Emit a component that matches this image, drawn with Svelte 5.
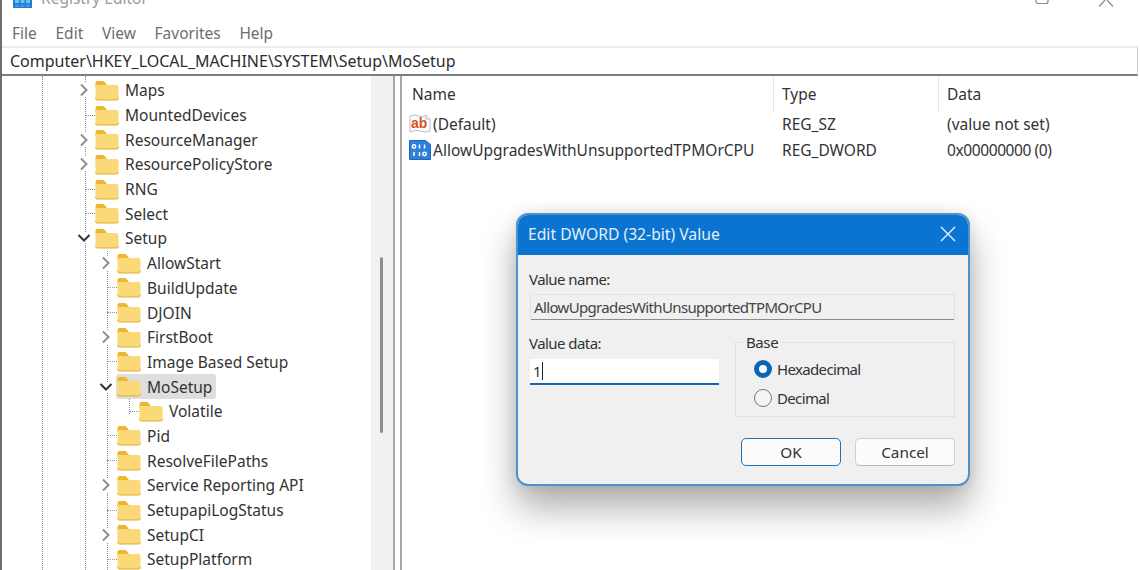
<script>
  const rows = [
    { name: 'Maps', depth: 0, arrow: 'closed' },
    { name: 'MountedDevices', depth: 0 },
    { name: 'ResourceManager', depth: 0, arrow: 'closed' },
    { name: 'ResourcePolicyStore', depth: 0, arrow: 'closed' },
    { name: 'RNG', depth: 0 },
    { name: 'Select', depth: 0 },
    { name: 'Setup', depth: 0, arrow: 'open' },
    { name: 'AllowStart', depth: 1, arrow: 'closed' },
    { name: 'BuildUpdate', depth: 1 },
    { name: 'DJOIN', depth: 1 },
    { name: 'FirstBoot', depth: 1, arrow: 'closed' },
    { name: 'Image Based Setup', depth: 1 },
    { name: 'MoSetup', depth: 1, arrow: 'open', selected: true },
    { name: 'Volatile', depth: 2 },
    { name: 'Pid', depth: 1 },
    { name: 'ResolveFilePaths', depth: 1 },
    { name: 'Service Reporting API', depth: 1, arrow: 'closed' },
    { name: 'SetupapiLogStatus', depth: 1 },
    { name: 'SetupCI', depth: 1, arrow: 'closed' },
    { name: 'SetupPlatform', depth: 1 }
  ];
</script>

<div class="window">
  <div class="titlebar">
    <svg class="app-icon" width="19" height="8" viewBox="0 0 19 8">
      <rect x="0" y="0" width="19" height="8" fill="#1f7fd1" />
      <path d="M2 0h4v3H2zM7.500 0h4v3h-4zM13 0h4v3h-4z" fill="#6fbdf2" />
      <path d="M2 4.500h4V7H2zM7.500 4.500h4V7h-4zM13 4.500h4V7h-4z" fill="#3f9ce4" />
    </svg>
    <span class="title">Registry Editor</span>
    <svg class="win-btn max" width="14" height="5" viewBox="0 0 14 5">
      <path d="M1 0v1.500a2 2 0 0 0 2 2h8a2 2 0 0 0 2-2V0" fill="none" stroke="#8a8a8a" stroke-width="1.2" />
    </svg>
    <svg class="win-btn close" width="16" height="7" viewBox="0 0 16 7">
      <path d="M7 0L1 6.500M9 0l6 6.500" fill="none" stroke="#8a8a8a" stroke-width="1.2" />
    </svg>
  </div>

  <nav class="menu">
    <span>File</span><span>Edit</span><span>View</span><span>Favorites</span><span>Help</span>
  </nav>

  <div class="address">Computer\HKEY_LOCAL_MACHINE\SYSTEM\Setup\MoSetup</div>

  <div class="panes">
    <div class="tree">
      <div class="tree-list">
        <i class="guide g0"></i>
        <i class="guide g1"></i>
        <i class="guide g2"></i>
        <i class="guide g3"></i>
        {#each rows as row}
          <div class="row d{row.depth}">
            <span class="arrow">
              {#if row.arrow === 'closed'}
                <svg width="10" height="14" viewBox="0 0 10 14"><path d="M2 1.500l5.500 5.500L2 12.500" fill="none" stroke="#8c8c8c" stroke-width="1.9" /></svg>
              {:else if row.arrow === 'open'}
                <svg width="14" height="10" viewBox="0 0 14 10"><path d="M1.500 2l5.500 5.500L12.500 2" fill="none" stroke="#333" stroke-width="2" /></svg>
              {:else}
                <i class="stub"></i>
              {/if}
            </span>
            <span class="item" class:selected={row.selected}>
              <svg class="folder" width="24" height="21" viewBox="0 0 24 21">
                <path d="M0.500 3a2 2 0 0 1 2-2h6l3 3v3h-11z" fill="#eeb530" />
                <path d="M0.500 5h21a2 2 0 0 1 2 2v11a2 2 0 0 1-2 2h-19a2 2 0 0 1-2-2z" fill="#fbd978" />
                <path d="M0.500 18a2 2 0 0 0 2 2h19a2 2 0 0 0 2-2" fill="none" stroke="#e2ab35" stroke-width="1" />
              </svg>
              <span class="label">{row.name}</span>
            </span>
          </div>
        {/each}
      </div>
      <div class="scrollbar"><i class="thumb"></i></div>
    </div>

    <div class="values">
      <div class="thead">
        <span class="c-name">Name</span>
        <span class="c-type">Type</span>
        <span class="c-data">Data</span>
      </div>
      <div class="vrow">
        <span class="c-name">
          <svg class="vicon" width="22" height="22" viewBox="0 0 22 22">
            <path d="M1 3q5-2 9 0t7-1l4 4v12q-5 2-10 0t-10 1z" fill="#fff" stroke="#bdbdbd" />
            <path d="M17 2v4h4" fill="#f2f2f2" stroke="#bdbdbd" />
            <text class="ab" x="2" y="14.500">ab</text>
          </svg>
          (Default)
        </span>
        <span class="c-type">REG_SZ</span>
        <span class="c-data">(value not set)</span>
      </div>
      <div class="vrow">
        <span class="c-name">
          <svg class="vicon" width="22" height="22" viewBox="0 0 22 22">
            <path d="M0.500 1.500h16l5 4v15h-21z" fill="#2f7fdc" stroke="#2067b8" />
            <g fill="none" stroke="#fff" stroke-width="1.500">
              <circle cx="5" cy="7.500" r="1.700" />
              <path d="M10.500 5.500v4M15.500 5.500v4M5 13v4M10.500 13v4" />
              <circle cx="15.500" cy="15" r="1.700" />
            </g>
          </svg>
          AllowUpgradesWithUnsupportedTPMOrCPU
        </span>
        <span class="c-type">REG_DWORD</span>
        <span class="c-data data-value">0x00000000 (0)</span>
      </div>
    </div>
  </div>

  <div class="dialog">
    <div class="dlg-title">
      <span>Edit DWORD (32-bit) Value</span>
      <svg width="16" height="16" viewBox="0 0 16 16"><path d="M1 1l14 14M15 1L1 15" stroke="#e8f2fb" stroke-width="1.400" fill="none" /></svg>
    </div>
    <div class="dlg-body">
      <div class="lbl">Value name:</div>
      <div class="name-field">AllowUpgradesWithUnsupportedTPMOrCPU</div>
      <div class="dlg-cols">
        <div class="data-col">
          <div class="lbl">Value data:</div>
          <div class="data-field">1<i class="caret"></i></div>
        </div>
        <fieldset class="base">
          <legend>Base</legend>
          <div class="radio"><i class="dot on"></i>Hexadecimal</div>
          <div class="radio"><i class="dot"></i>Decimal</div>
        </fieldset>
      </div>
      <div class="btns">
        <button class="ok">OK</button>
        <button>Cancel</button>
      </div>
    </div>
  </div>
</div>

<style>
  :global(body) {
    margin: 0;
    background: #fff;
  }

  .window {
    position: relative;
    width: 1140px;
    height: 570px;
    overflow: hidden;
    box-sizing: border-box;
    border-left: 2px solid #6f6f6f;
    padding-right: 2px;
    background: #fff;
    font-family: "Noto Sans", "Open Sans", sans-serif;
    font-size: 16px;
    color: #333;
  }

  .titlebar {
    height: 12px;
    display: flex;
    align-items: flex-start;
    overflow: hidden;
    padding-left: 11px;
    color: #9a9a9a;
  }
  .app-icon { margin-right: 9px; flex: none; }
  .title { margin-top: -12px; font-size: 15.500px; line-height: 20px; flex: 1; }
  .win-btn { flex: none; }
  .win-btn.max { margin-right: 49px; }
  .win-btn.close { margin-right: 24px; }

  .menu {
    height: 34px;
    box-sizing: border-box;
    padding: 8px 0 0 10px;
    display: flex;
    align-items: center;
    gap: 18.700px;
    color: #6e6e6e;
    font-size: 15.500px;
  }

  .address {
    height: 30px;
    box-sizing: border-box;
    border-top: 2px solid #ececec;
    border-bottom: 2px solid #7e7e7e;
    border-right: 1px solid #d0d0d0;
    line-height: 26px;
    padding-left: 8px;
    font-size: 16px;
    color: #2c2c2c;
  }

  .panes {
    display: flex;
    height: 494px;
  }

  .tree {
    width: 393px;
    flex: none;
    display: flex;
    border-right: 2px solid #a8a8a8;
    box-sizing: border-box;
  }
  .tree-list {
    position: relative;
    flex: 1;
    overflow: hidden;
    padding-top: 2px;
  }
  .guide {
    position: absolute;
    border-left: 1px dotted #8f8f8f;
    width: 0;
  }
  .g0 { left: 40px; top: 0; bottom: 0; }
  .g1 { left: 83px; top: 0; bottom: 0; }
  .g2 { left: 105px; top: 175px; bottom: 0; }
  .g3 { left: 127px; top: 322px; height: 16px; }

  .row {
    height: 24.700px;
    display: flex;
    align-items: center;
    position: relative;
    white-space: nowrap;
  }
  .arrow {
    width: 22px;
    height: 100%;
    flex: none;
    display: flex;
    align-items: center;
    justify-content: center;
    position: relative;
  }
  .arrow svg { background: #fff; }
  .d0 { padding-left: 71px; }
  .d1 { padding-left: 93px; }
  .d2 { padding-left: 115px; }
  .stub {
    display: block;
    width: 10px;
    margin-left: 12px;
    border-top: 1px dotted #8f8f8f;
  }
  .item {
    display: flex;
    align-items: center;
    height: 100%;
    position: relative;
  }
  .item.selected {
    background: #dedede;
    padding: 0 4px 0 1px;
    margin-left: -1px;
    border-radius: 3px;
  }
  .folder { flex: none; margin-right: 6px; }
  .label { font-size: 15.500px; color: #333; }

  .scrollbar {
    width: 22px;
    flex: none;
    background: #f1f1f1;
    position: relative;
  }
  .thumb {
    position: absolute;
    left: 9px;
    top: 181px;
    width: 3px;
    height: 176px;
    background: #8d8d8d;
    border-radius: 2px;
  }

  .values {
    flex: 1;
    margin-left: 5px;
    border-left: 2px solid #a8a8a8;
    padding-top: 1px;
    font-size: 15.500px;
  }
  .thead, .vrow {
    display: flex;
    align-items: center;
    white-space: nowrap;
  }
  .thead { height: 34px; }
  .vrow { height: 26px; }
  .c-name {
    width: 376px;
    box-sizing: border-box;
    padding-left: 7px;
    display: flex;
    align-items: center;
    gap: 2px;
    flex: none;
  }
  .c-type { width: 165px; padding-left: 4px; box-sizing: border-box; flex: none; }
  .c-data { padding-left: 4px; }
  .data-value { letter-spacing: -0.400px; }
  .thead span { height: 34px; line-height: 34px; }
  .thead .c-name { width: 371px; padding-left: 10px; }
  .thead .c-type, .thead .c-data { border-left: 1px solid #e4e4e4; padding-left: 8px; }
  .vicon { flex: none; }
  .ab {
    font-family: "Liberation Sans", sans-serif;
    font-size: 14px;
    font-weight: 700;
    fill: #d8501f;
  }

  .dialog {
    position: absolute;
    left: 514px;
    top: 213px;
    width: 454px;
    height: 273px;
    box-sizing: border-box;
    border-radius: 12px;
    border: 2px solid #4a93cf;
    background: #f0f0f0;
    box-shadow: 0 22px 36px rgba(0, 0, 0, 0.32), 0 0 14px rgba(0, 0, 0, 0.1);
    overflow: hidden;
    font-size: 15px;
    color: #333;
  }
  .dlg-title {
    height: 42px;
    margin: -2px -2px 0;
    padding: 0 14px 0 12px;
    background: #0a74d0;
    color: #e3f0fa;
    font-size: 15.700px;
    display: flex;
    align-items: center;
    justify-content: space-between;
  }
  .dlg-body { padding: 14px 13px 0 12px; }
  .lbl { line-height: 20px; letter-spacing: -0.550px; margin-left: -1px; }
  .name-field {
    margin-top: 5px;
    height: 26px;
    line-height: 24px;
    box-sizing: border-box;
    padding-left: 3px;
    background: #f0f0f0;
    border: 1px solid #e2e2e2;
    border-bottom: 1.500px solid #8c8c8c;
    border-radius: 2px;
    letter-spacing: -0.650px;
    color: #444;
  }
  .dlg-cols {
    display: flex;
    justify-content: space-between;
    margin-top: 13px;
  }
  .data-col { width: 189px; }
  .data-field {
    margin-top: 6px;
    height: 26px;
    box-sizing: border-box;
    background: #fff;
    border-bottom: 2px solid #1766ad;
    padding-left: 3px;
    display: flex;
    align-items: center;
  }
  .caret {
    display: block;
    width: 1.500px;
    height: 18px;
    background: #222;
  }
  .base {
    width: 220px;
    height: 83px;
    margin: 1px 0 0;
    box-sizing: border-box;
    padding: 4.500px 0 0 18px;
    border: 1px solid #e0e0e0;
  }
  legend {
    padding: 0 4px;
    margin-left: -12px;
    line-height: 16px;
    letter-spacing: -0.400px;
  }
  .radio {
    height: 29px;
    display: flex;
    align-items: center;
    gap: 5px;
    letter-spacing: -0.650px;
  }
  .dot {
    width: 18px;
    height: 18px;
    box-sizing: border-box;
    border-radius: 50%;
    border: 1.500px solid #777;
    background: #f5f5f5;
    flex: none;
  }
  .dot.on {
    border: 5px solid #0a66b5;
    background: #fff;
  }
  .btns {
    display: flex;
    justify-content: flex-end;
    gap: 14px;
    margin-top: 21px;
  }
  button {
    width: 100px;
    height: 28px;
    box-sizing: border-box;
    padding: 0;
    background: #fbfbfb;
    border: 1px solid #d0d0d0;
    border-bottom-color: #b5b5b5;
    border-radius: 5px;
    font: inherit;
    font-size: 15.300px;
    color: #333;
  }
  button.ok {
    border: 1.500px solid #1b72b5;
  }
</style>
